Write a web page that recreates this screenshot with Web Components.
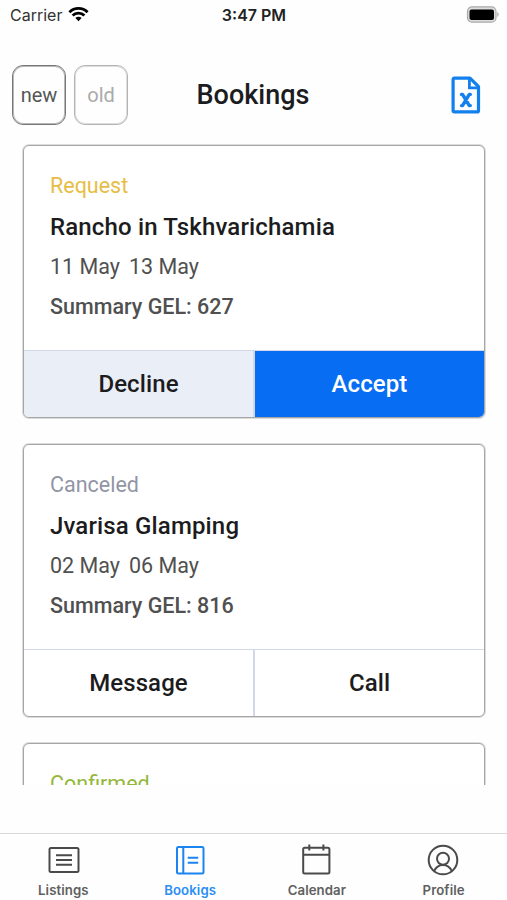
<!DOCTYPE html>
<html lang="en">
<head>
<meta charset="UTF-8">
<meta name="viewport" content="width=device-width, initial-scale=1">
<title>Bookings</title>
<style>
    html, body {
        margin: 0;
        height: 100%;
        overflow: hidden;
        background: #fefefe;
    }
</style>
</head>
<body>
<bookings-app></bookings-app>
<script>
function render(element, html) {
    const template = document.createElement('template');
    template.innerHTML = html;
    element.attachShadow({ mode: 'open' });
    element.shadowRoot.appendChild(template.content.cloneNode(true));
}

class StatusBar extends HTMLElement {
    constructor() {
        super();
        render(this, `
            <style>
                :host {
                    display: grid;
                    grid-template-columns: 1fr auto 1fr;
                    align-items: center;
                    height: 30px;
                    box-sizing: border-box;
                    padding: 0 8px 0 10px;
                    font: 400 16px/30px Inter, sans-serif;
                    color: #333;
                }
                .carrier, .battery {
                    display: flex;
                    align-items: center;
                }
                .carrier { gap: 6px; }
                .carrier svg, .battery svg { margin-top: -2px; }
                .time {
                    margin: -1px 1px 0 0;
                    color: #222;
                    font-weight: 600;
                }
                .battery { justify-content: flex-end; }
                svg { display: block; }
            </style>
            <div class="carrier">
                <span>Carrier</span>
                <svg width="21" height="16" viewBox="0 0 21 16" fill="none" stroke="#000" stroke-width="2.8">
                    <path d="M1.4 6.2a12.9 12.9 0 0 1 18.2 0"/>
                    <path d="M4.6 9.6a8.3 8.3 0 0 1 11.8 0"/>
                    <path d="M10.5 15.2l-3.1-3.1a4.4 4.4 0 0 1 6.2 0z" fill="#000" stroke="none"/>
                </svg>
            </div>
            <span class="time">3:47 PM</span>
            <div class="battery">
                <svg width="33" height="17" viewBox="0 0 33 17">
                    <rect x="1.5" y=".8" width="28.5" height="15.4" rx="4.5" fill="#ddd" stroke="#aaa" stroke-width="1.2"/>
                    <rect x="3.5" y="3.5" width="24.5" height="10.5" rx="2" fill="#000"/>
                    <path d="M31.3 6v5q1.4-.8 1.4-2.5T31.3 6z" fill="#aaa"/>
                </svg>
            </div>
        `);
    }
}

class FilterButton extends HTMLElement {
    constructor() {
        super();
        render(this, `
            <style>
                :host {
                    display: flex;
                    align-items: center;
                    justify-content: center;
                    box-sizing: border-box;
                    width: 54px;
                    height: 60px;
                    border: 1px solid #b4b4b4;
                    border-radius: 11px;
                    box-shadow: inset 0 0 0 1px #dedede;
                    font: 400 20px/24px Roboto, sans-serif;
                    color: #aaa;
                }
                :host([active]) {
                    border-color: #777;
                    box-shadow: inset 0 0 0 1px #b8b8b8;
                    color: #555;
                }
            </style>
            <slot></slot>
        `);
    }
}

class PageHeader extends HTMLElement {
    constructor() {
        super();
        render(this, `
            <style>
                :host {
                    display: grid;
                    grid-template-columns: 1fr auto 1fr;
                    align-items: center;
                    box-sizing: border-box;
                    height: 114px;
                    padding: 16px 26px 0 12px;
                }
                .filters {
                    display: flex;
                    gap: 8px;
                }
                h1 {
                    margin: 0 0 0 13px;
                    font: 500 27px/32px Roboto, sans-serif;
                    color: #1c1c1e;
                }
                svg {
                    display: block;
                    justify-self: end;
                }
            </style>
            <div class="filters"><slot name="filters"></slot></div>
            <h1><slot></slot></h1>
            <svg width="30" height="40" viewBox="0 0 30 40" fill="none" stroke="#1380ee" stroke-width="3.2" stroke-linejoin="round" stroke-linecap="round">
                <path d="M3.6 3.1H19l8.5 8.5v24.1q0 1.2-1.2 1.2h-23q-1.2 0-1.2-1.2V4.5q0-1.4 1.5-1.4z"/>
                <path d="M18.4 3.6v9.200H27" stroke-width="2.8" stroke-linejoin="miter"/>
                <path d="M10.500 19.400h1l6.800 11.200h1M19.300 19.400h-1l-6.800 11.200h-1" stroke-width="3.400"/>
            </svg>
        `);
    }
}

class BookingCard extends HTMLElement {
    constructor() {
        super();
        render(this, `
            <style>
                :host {
                    display: flex;
                    flex-direction: column;
                    flex: none;
                    box-sizing: border-box;
                    height: 273px;
                    border: 1px solid #a6a6a6;
                    border-radius: 6px;
                    box-shadow: 0 0 0 1px #dcdcdc;
                    overflow: hidden;
                    background: #fff;
                    font: 400 21.5px/26px Roboto, sans-serif;
                    color: #505050;
                }
                .info {
                    flex: 1;
                    padding: 27px 26px 0;
                }
                .status { color: #e8bd45; }
                :host([status="canceled"]) .status { color: #9195a5; }
                :host([status="confirmed"]) .status { color: #94b83a; }
                h2 {
                    margin: 14px 0 13px;
                    font: 500 24px/28px Roboto, sans-serif;
                    letter-spacing: .15px;
                    color: #1c1c1e;
                }
                .dates {
                    display: flex;
                    gap: 9px;
                }
                .summary {
                    margin-top: 14px;
                    font-weight: 500;
                }
                .actions {
                    display: grid;
                    grid-template-columns: 231px 1fr;
                    height: 66px;
                    border-top: 1px solid #d3d8e8;
                }
            </style>
            <div class="info">
                <div class="status"><slot name="status"></slot></div>
                <h2><slot name="title"></slot></h2>
                <div class="dates"><slot name="from"></slot><slot name="to"></slot></div>
                <div class="summary"><slot name="summary"></slot></div>
            </div>
            <div class="actions"><slot name="action"></slot></div>
        `);
    }
}

class CardAction extends HTMLElement {
    constructor() {
        super();
        render(this, `
            <style>
                :host {
                    display: flex;
                    align-items: center;
                    justify-content: center;
                    font: 500 24px/28px Roboto, sans-serif;
                    letter-spacing: .1px;
                    color: #1c1c1e;
                }
                :host(:first-of-type) { border-right: 2px solid #d3d8e8; }
                :host([kind="secondary"]) { background: #eaeef7; }
                :host([kind="primary"]) {
                    background: #076df2;
                    color: #fff;
                }
            </style>
            <slot></slot>
        `);
    }
}

const TAB_ICONS = {
    listings: `
        <rect x="3.5" y="5" width="29" height="24" rx="1.5"/>
        <path d="M10 12.3h16M10 17h16M10 21.7h16"/>`,
    bookings: `
        <rect x="4" y="4" width="26.5" height="26.5" rx="1.5"/>
        <path d="M10.3 4v26.5M14.7 14.8h10.5M14.7 19.7h10.5"/>`,
    calendar: `
        <rect x="4.2" y="4.8" width="26.2" height="25.6" rx="1.5"/>
        <path d="M4.2 11.7h26.2M10.3 1.5v6M24.4 1.5v6"/>`,
    profile: `
        <circle cx="17" cy="17" r="14.3"/>
        <circle cx="17" cy="15.8" r="6"/>
        <path d="M8 28.3q2.800-6.300 9-6.300t9 6.300"/>`
};

class TabItem extends HTMLElement {
    constructor() {
        super();
        render(this, `
            <style>
                :host {
                    display: flex;
                    flex-direction: column;
                    align-items: center;
                    gap: 4px;
                    padding-top: 9px;
                    font: 600 13.2px/18px Inter, sans-serif;
                    letter-spacing: .1px;
                    color: #606060;
                }
                :host([active]) { color: #2b8ef2; }
                svg {
                    display: block;
                    fill: none;
                    stroke: #4a4a4a;
                    stroke-width: 2;
                }
                :host([active]) svg { stroke: #1a84f0; }
            </style>
            <svg width="35" height="34" viewBox="0 0 35 34"></svg>
            <span><slot></slot></span>
        `);
    }

    connectedCallback() {
        this.shadowRoot.querySelector('svg').innerHTML = TAB_ICONS[this.getAttribute('icon')];
    }
}

class TabBar extends HTMLElement {
    constructor() {
        super();
        render(this, `
            <style>
                :host {
                    display: grid;
                    grid-template-columns: repeat(4, 1fr);
                    flex: none;
                    box-sizing: border-box;
                    height: 67px;
                    border-top: 1px solid #d8d8d8;
                }
            </style>
            <slot></slot>
        `);
    }
}

class BookingsApp extends HTMLElement {
    constructor() {
        super();
        render(this, `
            <style>
                :host {
                    display: flex;
                    flex-direction: column;
                    width: 507px;
                    height: 900px;
                    overflow: hidden;
                }
                status-bar, page-header { flex: none; }
                .list {
                    display: flex;
                    flex-direction: column;
                    gap: 26px;
                    box-sizing: border-box;
                    height: 641px;
                    padding: 1px 22px 0 23px;
                    overflow: hidden;
                }
                tab-bar { margin-top: auto; }
            </style>
            <status-bar></status-bar>
            <page-header>
                <filter-button slot="filters" active>new</filter-button>
                <filter-button slot="filters">old</filter-button>
                Bookings
            </page-header>
            <div class="list">
                <booking-card status="request">
                    <span slot="status">Request</span>
                    <span slot="title">Rancho in Tskhvarichamia</span>
                    <span slot="from">11 May</span>
                    <span slot="to">13 May</span>
                    <span slot="summary">Summary GEL: 627</span>
                    <card-action slot="action" kind="secondary">Decline</card-action>
                    <card-action slot="action" kind="primary">Accept</card-action>
                </booking-card>
                <booking-card status="canceled">
                    <span slot="status">Canceled</span>
                    <span slot="title">Jvarisa Glamping</span>
                    <span slot="from">02 May</span>
                    <span slot="to">06 May</span>
                    <span slot="summary">Summary GEL: 816</span>
                    <card-action slot="action">Message</card-action>
                    <card-action slot="action">Call</card-action>
                </booking-card>
                <booking-card status="confirmed">
                    <span slot="status">Confirmed</span>
                </booking-card>
            </div>
            <tab-bar>
                <tab-item icon="listings">Listings</tab-item>
                <tab-item icon="bookings" active>Bookigs</tab-item>
                <tab-item icon="calendar">Calendar</tab-item>
                <tab-item icon="profile">Profile</tab-item>
            </tab-bar>
        `);
    }
}

customElements.define('status-bar', StatusBar);
customElements.define('filter-button', FilterButton);
customElements.define('page-header', PageHeader);
customElements.define('booking-card', BookingCard);
customElements.define('card-action', CardAction);
customElements.define('tab-item', TabItem);
customElements.define('tab-bar', TabBar);
customElements.define('bookings-app', BookingsApp);
</script>
</body>
</html>
